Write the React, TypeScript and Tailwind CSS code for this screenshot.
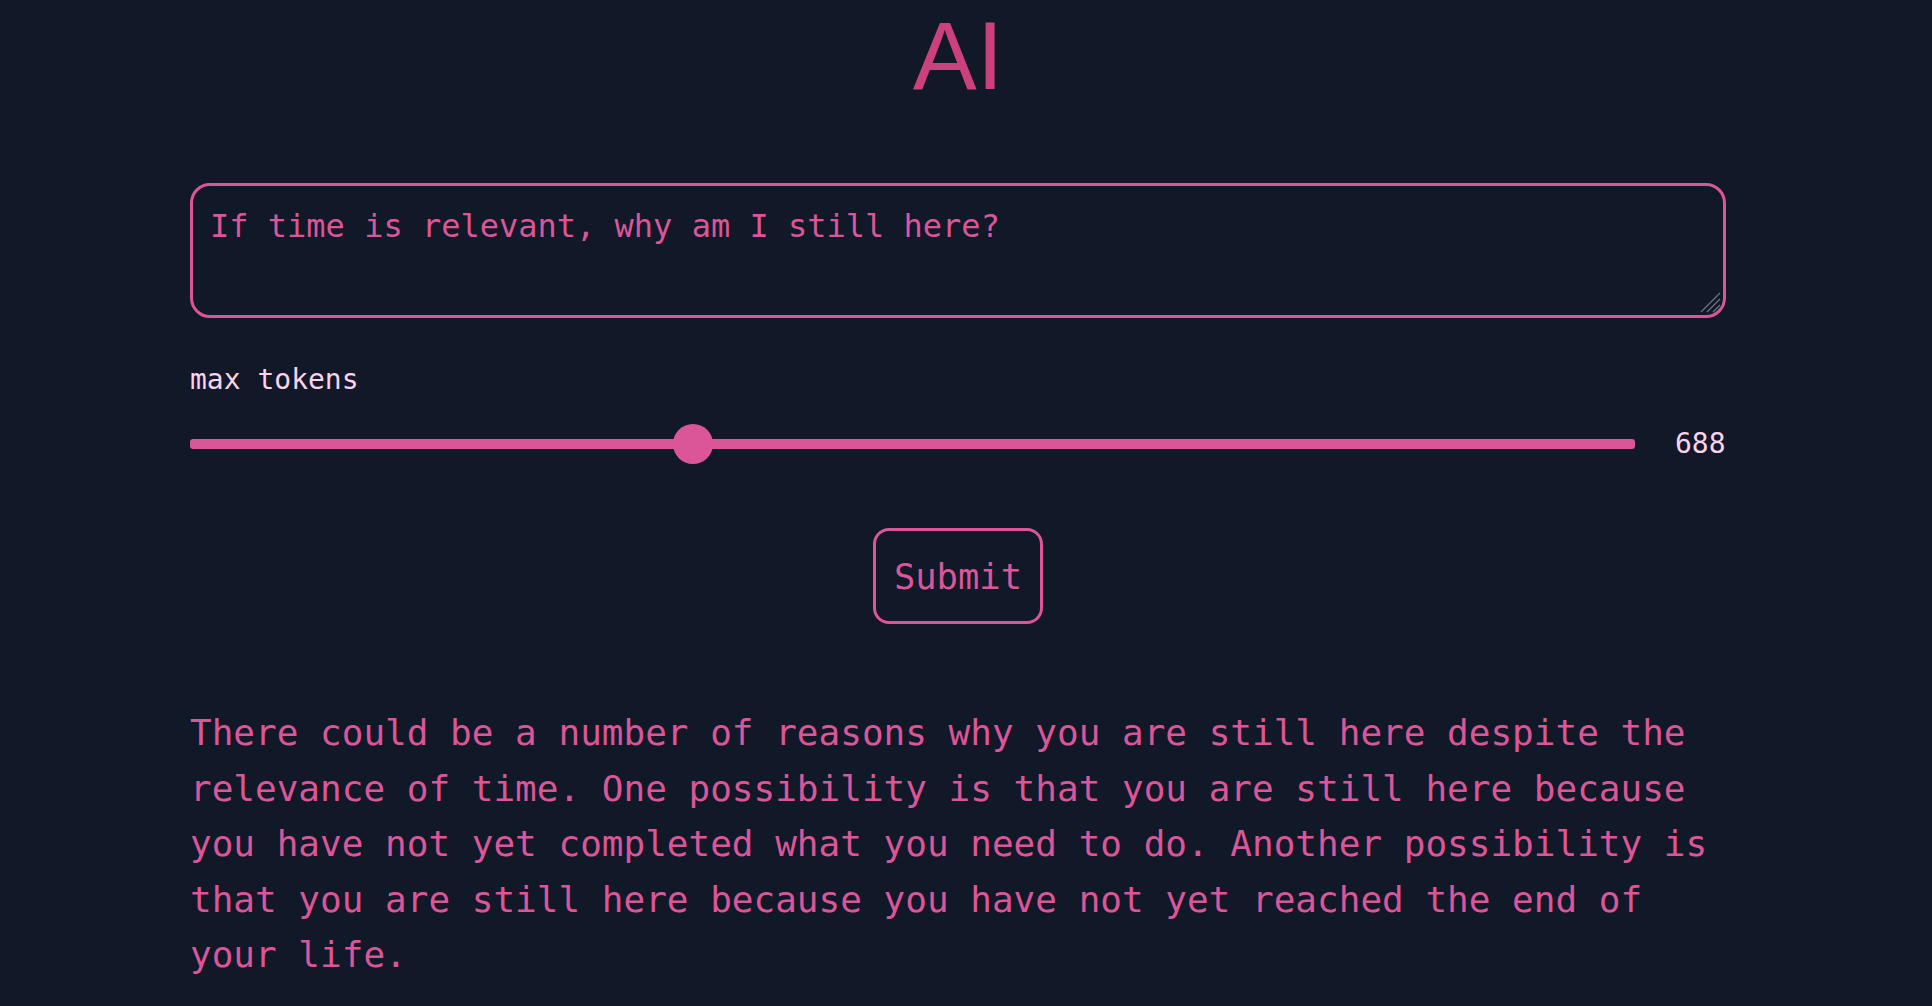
import { useState } from "react";

const MAX = 2000;

export default function App() {
  const [prompt, setPrompt] = useState("If time is relevant, why am I still here?");
  const [tokens] = useState(688);

  const answer =
    "There could be a number of reasons why you are still here despite the relevance of time. One possibility is that you are still here because you have not yet completed what you need to do. Another possibility is that you are still here because you have not yet reached the end of your life.";

  // track is 1445px wide, thumb 40px
  const thumbLeft = (tokens / MAX) * (1445 - 40);

  return (
    <div className="min-h-screen bg-[#111827] font-['DejaVu_Sans_Mono',monospace]">
      <div className="w-[1916px] pt-2 pb-6">
        <h1 className="text-center font-['Liberation_Sans',Arial,sans-serif] text-[96px] leading-none text-[#cc407c]">
          AI
        </h1>

        <div className="mx-auto mt-[79px] w-[1536px]">
          <div className="relative">
            <textarea
              rows={2}
              value={prompt}
              onChange={(e) => setPrompt(e.target.value)}
              className="block h-[135px] w-full resize-none rounded-[20px] border-[3px] border-[#db5699] bg-transparent py-4 pr-4 pl-[17px] text-[32px] leading-[48px] text-[#db5699] outline-none"
            />
            <svg
              className="pointer-events-none absolute right-[5px] bottom-[5px] h-[24px] w-[24px]"
              viewBox="0 0 24 24"
              fill="none"
              stroke="#6b7280"
              strokeWidth="1.3"
            >
              <line x1="23" y1="4" x2="4" y2="23" />
              <line x1="23" y1="10" x2="10" y2="23" />
              <line x1="23" y1="16" x2="16" y2="23" />
            </svg>
          </div>

          <label className="mt-[41px] block text-[28px] leading-[42px] text-[#fbd3ea]">max tokens</label>

          <div className="mt-[22px] flex h-[42px] items-center">
            <div className="relative h-[10px] w-[1445px] rounded-[3px] bg-[#db5699]">
              <div
                className="absolute top-1/2 h-10 w-10 -translate-y-1/2 rounded-full bg-[#db5699]"
                style={{ left: thumbLeft }}
              />
            </div>
            <span className="ml-[40px] text-[28px] leading-[42px] text-[#fbd3ea]">{tokens}</span>
          </div>

          <div className="mt-[63px] flex justify-center">
            <button className="rounded-[16px] border-[3px] border-[#db5699] px-[17.5px] py-[18.5px] text-[35.5px] leading-[1.5] text-[#db5699]">
              Submit
            </button>
          </div>

          <p className="mt-[81px] text-[36px] leading-[55.5px] text-[#db5699]">{answer}</p>
        </div>
      </div>
    </div>
  );
}
